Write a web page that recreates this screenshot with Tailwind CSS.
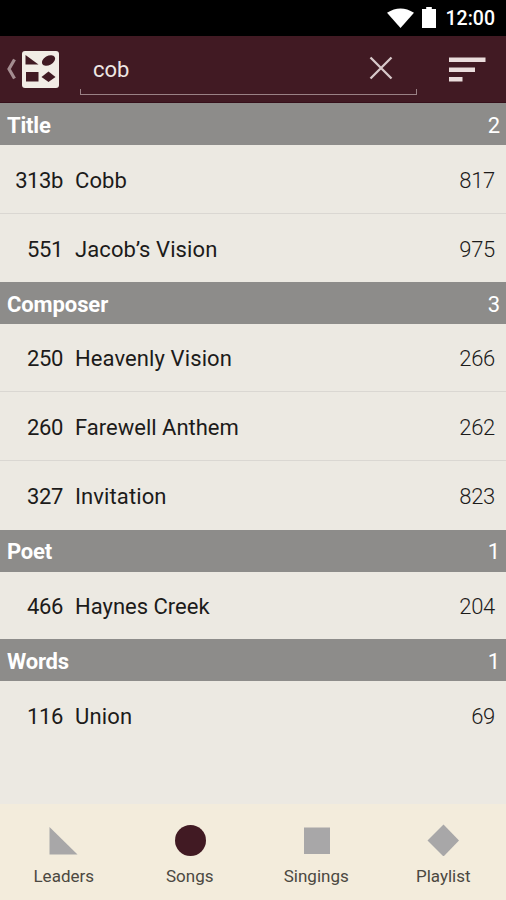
<!DOCTYPE html>
<html lang="en">
<head>
<meta charset="utf-8">
<title>Song search</title>
<script src="https://cdn.jsdelivr.net/npm/@tailwindcss/browser@4"></script>
</head>
<body class="w-[506px] h-[900px] overflow-hidden flex flex-col bg-[#ece9e2] font-['Roboto',sans-serif] text-[#1c1b1a]">
  <div class="h-9 shrink-0 bg-black flex items-center justify-end pr-[11px] text-white">
    <svg class="w-[27px] h-[20px] mr-[8px]" viewBox="0 0 27 21" preserveAspectRatio="none"><path d="M0 5Q13.500-4 27 5L13.500 21Z" fill="#fff"/></svg>
    <svg class="w-[14px] h-[21px] mr-[10px] mb-px" viewBox="0 0 15 21" preserveAspectRatio="none"><path d="M4.500 0h6v2H15v19H0V2h4.500Z" fill="#fff"/></svg>
    <span class="text-[19.500px] font-medium leading-9 pt-[2px]">12:00</span>
  </div>
  <header class="h-[67px] shrink-0 bg-[#411a23] border-b border-[#35101a] flex items-start">
    <svg class="w-[11px] h-[22px] ml-[6px] mt-[22px]" viewBox="0 0 11 22"><path d="M8.500 1.500L3 11L8.500 20.500" fill="none" stroke="#a48d90" stroke-width="3.200"/></svg>
    <svg class="w-[38px] h-[38px] ml-[4px] mt-[14px]" viewBox="0 0 38 38"><rect x="1" y="1" width="37" height="37" rx="3" fill="#f1ece5"/><g fill="#411a23"><path d="M4.500 5L17.500 14.500H4.500Z"/><ellipse cx="27.500" cy="10.500" rx="7.200" ry="4.600" transform="rotate(-30 27.500 10.500)"/><path d="M5 22h12.500v9.500H5Z"/><path d="M20.500 27L27.500 21.500L34.500 27L27.500 32Z"/></g></svg>
    <div class="ml-[21px] w-[337px] h-[59px] relative flex items-start justify-between pl-[13px] pr-[24px] text-[#eee6e3] text-[22px]">
      <span class="leading-[30px] mt-[19px]">cob</span>
      <svg class="w-6 h-6 mt-[20px]" viewBox="0 0 24 24"><path d="M1.500 1.500L22.500 22.500M22.500 1.500L1.500 22.500" stroke="#d8c9ca" stroke-width="2.300"/></svg>
      <div class="absolute left-0 right-0 bottom-0 h-[6px] border-x border-b border-[#9a8185]"></div>
    </div>
    <svg class="w-[38px] h-[26px] ml-[32px] mt-[21px]" viewBox="0 0 38 26"><path d="M0 .5h36.500v4.500H0ZM0 10.500h26v4.500H0ZM0 20h13.500v4.500H0Z" fill="#eadddc"/></svg>
  </header>
  <main class="h-[701px] shrink-0 text-[22px]">
    <section>
      <h2 class="h-[42px] pt-[2px] bg-[#8d8c8a] text-white flex items-center justify-between pl-[7px] pr-[6px]"><b class="font-bold tracking-[-0.2px]">Title</b><span>2</span></h2>
      <div class="h-[69px] pt-[2px] border-b border-[#dad7d2] flex items-center pr-[11px]"><span class="w-[63px] text-right tracking-[-0.4px]">313b</span><span class="ml-3 flex-1 tracking-[0.1px]">Cobb</span><span class="font-light tracking-[-0.3px]">817</span></div>
      <div class="h-[68px] pt-[2px] flex items-center pr-[11px]"><span class="w-[63px] text-right tracking-[-0.4px]">551</span><span class="ml-3 flex-1 tracking-[0.1px]">Jacob’s Vision</span><span class="font-light tracking-[-0.3px]">975</span></div>
    </section>
    <section>
      <h2 class="h-[42px] pt-[2px] bg-[#8d8c8a] text-white flex items-center justify-between pl-[7px] pr-[6px]"><b class="font-bold tracking-[-0.1px]">Composer</b><span>3</span></h2>
      <div class="h-[68px] pt-[2px] border-b border-[#dad7d2] flex items-center pr-[11px]"><span class="w-[63px] text-right tracking-[-0.4px]">250</span><span class="ml-3 flex-1 tracking-[0.1px]">Heavenly Vision</span><span class="font-light tracking-[-0.3px]">266</span></div>
      <div class="h-[69px] pt-[2px] border-b border-[#dad7d2] flex items-center pr-[11px]"><span class="w-[63px] text-right tracking-[-0.4px]">260</span><span class="ml-3 flex-1">Farewell Anthem</span><span class="font-light tracking-[-0.3px]">262</span></div>
      <div class="h-[69px] pt-[2px] flex items-center pr-[11px]"><span class="w-[63px] text-right tracking-[-0.4px]">327</span><span class="ml-3 flex-1 tracking-[0.1px]">Invitation</span><span class="font-light tracking-[-0.3px]">823</span></div>
    </section>
    <section>
      <h2 class="h-[42px] pt-px bg-[#8d8c8a] text-white flex items-center justify-between pl-[7px] pr-[6px]"><b class="font-bold tracking-[-0.2px]">Poet</b><span>1</span></h2>
      <div class="h-[67px] pt-[2px] flex items-center pr-[11px]"><span class="w-[63px] text-right tracking-[-0.4px]">466</span><span class="ml-3 flex-1">Haynes Creek</span><span class="font-light tracking-[-0.3px]">204</span></div>
    </section>
    <section>
      <h2 class="h-[42px] pt-[2px] bg-[#8d8c8a] text-white flex items-center justify-between pl-[7px] pr-[6px]"><b class="font-bold tracking-[-0.2px]">Words</b><span>1</span></h2>
      <div class="h-[69px] pt-px flex items-center pr-[11px]"><span class="w-[63px] text-right tracking-[-0.4px]">116</span><span class="ml-3 flex-1 tracking-[0.2px]">Union</span><span class="font-light tracking-[-0.3px]">69</span></div>
    </section>
  </main>
  <nav class="flex-1 bg-[#f3ecdc] grid grid-cols-4 text-[17px] text-[#4b4841]">
    <div class="flex flex-col items-center pt-5"><svg class="w-8 h-8" viewBox="0 0 32 32"><path d="M2.500 3L30.500 30.500H2.500Z" fill="#a8a7a8"/></svg><span class="leading-6 mt-[8px] ml-px">Leaders</span></div>
    <div class="flex flex-col items-center pt-5"><svg class="w-8 h-8" viewBox="0 0 32 32"><circle cx="16.500" cy="16.500" r="15.500" fill="#411a23"/></svg><span class="leading-6 mt-[8px]">Songs</span></div>
    <div class="flex flex-col items-center pt-5"><svg class="w-8 h-8" viewBox="0 0 32 32"><path d="M4 3.500h26v26.500H4Z" fill="#a8a7a8"/></svg><span class="leading-6 mt-[8px]">Singings</span></div>
    <div class="flex flex-col items-center pt-5"><svg class="w-8 h-8" viewBox="0 0 32 32"><path d="M16.500 .5L32 16.500L16.500 32.500L.5 16.500Z" fill="#a8a7a8"/></svg><span class="leading-6 mt-[8px] ml-px">Playlist</span></div>
  </nav>
</body>
</html>
